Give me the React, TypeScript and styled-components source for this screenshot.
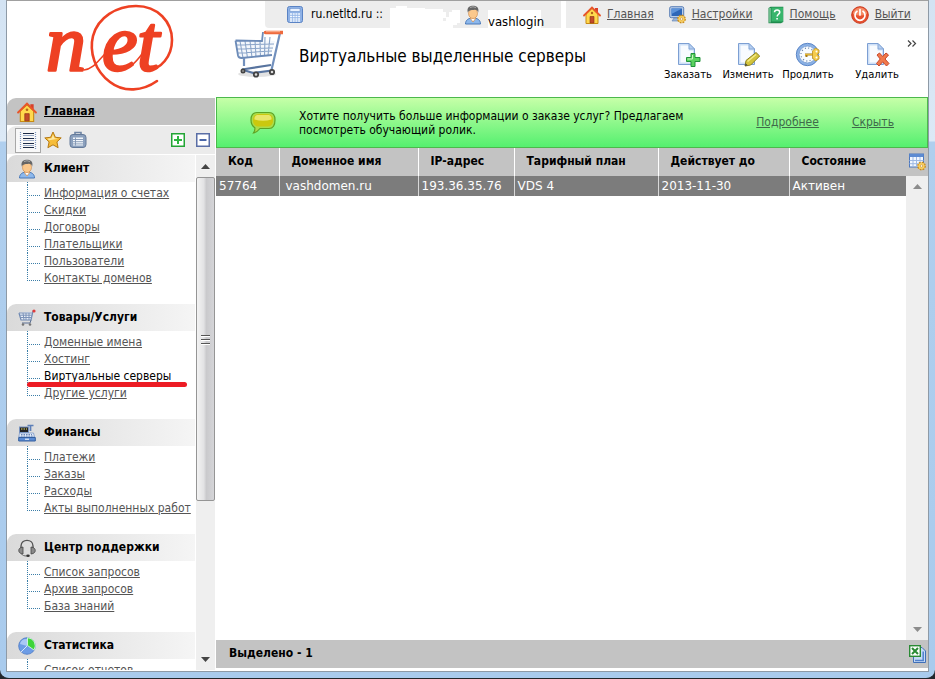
import React from 'react';
import styled, { createGlobalStyle, css } from 'styled-components';

const sans = "Tahoma, 'DejaVu Sans Condensed', 'DejaVu Sans', sans-serif";
const wide = "Verdana, 'DejaVu Sans', sans-serif";

const GlobalStyle = createGlobalStyle`
  * { box-sizing: border-box; }
  body { margin: 0; background: #23262b; font: 12px/17px ${sans}; color: #000; }
  ul { list-style: none; margin: 0; padding: 0; }
  button { font: inherit; color: inherit; background: none; border: 0; margin: 0; padding: 0; cursor: pointer; }
  svg { display: block; flex: none; }
`;

/* ---------- window ---------- */

const Frame = styled.div`
  height: 100vh;
  min-height: 400px;
  display: flex;
  padding: 0 6px 6px 6px;
  border-bottom: 1px solid #23262b;
  border-radius: 0 0 9px 9px;
  background: linear-gradient(#d3e3f3 0, #dce9f6 141px, #b0cfee 142px, #a9cbed 100%);
`;

const Page = styled.div`
  flex: 1;
  min-width: 0;
  display: flex;
  gap: 1px;
  background: #fff;
  border: 1px solid #8e9aa6;
  border-top-color: #a0a0a0;
  padding-bottom: 1px;
`;

const Sidebar = styled.aside`
  width: 208px;
  flex: none;
  display: flex;
  flex-direction: column;
`;

const Main = styled.main`
  flex: 1;
  min-width: 0;
  display: flex;
  flex-direction: column;
`;

/* ---------- sidebar ---------- */

const LogoBox = styled.div`
  height: 97px;
  padding-left: 34px;
`;

const LogoSvg = styled.svg`
  overflow: visible;
`;

const HomeBar = styled.div`
  height: 27px;
  display: flex;
  align-items: center;
  gap: 7px;
  padding-left: 10px;
  background: #c3c3c3;
  border-top-left-radius: 9px;
  font-weight: bold;
`;

const HomeLink = styled.a`
  color: #000;
`;

const ViewBar = styled.div`
  height: 28px;
  margin: 1px 0;
  display: flex;
  align-items: center;
  justify-content: space-between;
  padding: 0 5px 0 8px;
  background: #ebebeb;
  border-top-left-radius: 9px;
`;

const ViewGroup = styled.div<{ $gap: number }>`
  display: flex;
  align-items: center;
  gap: ${(p) => p.$gap}px;
`;

const ViewButton = styled.button<{ $active?: boolean }>`
  display: flex;
  ${(p) =>
    p.$active &&
    css`
      padding: 2px 3px;
      background: #f8f8f8;
      border: 1px solid #a8a8a8;
      margin-right: -4px;
    `}
`;

const Spacer = styled.div`
  flex: 1;
`;

const NavArea = styled.div`
  flex: 1;
  min-height: 0;
  display: flex;
  gap: 1px;
`;

const Nav = styled.nav`
  flex: 1;
  overflow: hidden;
`;

const GroupTitle = styled.h2`
  margin: 0;
  height: 27px;
  display: flex;
  align-items: center;
  gap: 8px;
  padding-left: 11px;
  font-size: 12px;
  border-top-left-radius: 9px;
  background: linear-gradient(to right, #dadada, #f5f5f5);
`;

const dotsDown = 'repeating-linear-gradient(#3b7ea8 0 1px, transparent 1px 2px)';
const dotsAcross = 'repeating-linear-gradient(to right, #3b7ea8 0 1px, transparent 1px 2px)';

const Items = styled.ul`
  padding: 3px 0 17px 20px;
  background: ${dotsDown} 20px 0 / 1px 3px no-repeat;
`;

const Item = styled.li`
  position: relative;
  height: 17px;
  padding-left: 17px;
  white-space: nowrap;
  background: ${dotsDown} 0 0 / 1px 100% no-repeat, ${dotsAcross} 0 10px / 14px 1px no-repeat;
  &:last-child {
    background: ${dotsDown} 0 0 / 1px 10px no-repeat, ${dotsAcross} 0 10px / 14px 1px no-repeat;
  }
`;

const ItemLink = styled.a<{ $current?: boolean }>`
  color: ${(p) => (p.$current ? '#000' : '#555')};
  text-decoration: ${(p) => (p.$current ? 'none' : 'underline')};
`;

const Marker = styled.span`
  position: absolute;
  left: 0;
  top: 14px;
  width: 160px;
  height: 5px;
  border-radius: 3px;
  background: #ed1c24;
  z-index: 1;
`;

/* ---------- scroll bars ---------- */

const Track = styled.div`
  width: 19px;
  flex: none;
  display: flex;
  flex-direction: column;
  background: #efefef;
`;

const Arrow = styled.button`
  height: 22px;
  width: 100%;
  display: flex;
  align-items: center;
  justify-content: center;
`;

const RowArrow = styled(Arrow)`
  height: 20px;
`;

const Thumb = styled.div`
  flex: 0 1 324px;
  display: flex;
  align-items: center;
  justify-content: center;
  border: 1px solid #959595;
  border-radius: 2px;
  background: linear-gradient(to right, #f3f3f3 0%, #e2e2e4 40%, #c9c9cc 55%, #d5d5d8 100%);
`;

/* ---------- top ---------- */

const TopBar = styled.div`
  height: 27px;
  display: flex;
  justify-content: space-between;
  gap: 5px;
  padding-left: 49px;
`;

const Account = styled.div`
  flex: 0 0 296px;
  display: flex;
  align-items: center;
  padding-left: 22px;
  background: #ededed;
  border-bottom-left-radius: 4px;
`;

const Host = styled.span`
  width: 75px;
  margin: 0 4px 0 8px;
  white-space: nowrap;
`;

const Login = styled.span`
  align-self: flex-end;
  height: 18px;
  width: 53px;
  margin-left: 6px;
  padding-top: 3px;
  background: #fff;
  font-size: 13px;
  white-space: nowrap;
`;

const Shortcuts = styled.nav`
  flex: 1;
  display: flex;
  align-items: center;
  gap: 15px;
  padding-left: 17px;
  background: #ededed;
`;

const Shortcut = styled.a`
  display: flex;
  align-items: center;
  gap: 6px;
  color: #555;
`;

const TitleRow = styled.header`
  height: 69px;
  display: flex;
  align-items: flex-start;
  padding: 0 11px 0 16px;
`;

const Title = styled.h1`
  flex: 1;
  margin: 14px 0 0 16px;
  font-size: 17px;
  line-height: 28px;
  font-weight: normal;
  white-space: nowrap;
`;

const Actions = styled.div`
  display: flex;
  padding-top: 14px;
`;

const Action = styled.button<{ $apart?: boolean }>`
  width: 60px;
  margin-left: ${(p) => (p.$apart ? '9px' : '0')};
  display: flex;
  flex-direction: column;
  align-items: center;
  gap: 1px;
  font: 10px/12px ${wide};
`;

const More = styled.button`
  margin-top: 12px;
`;

/* ---------- banner ---------- */

const Banner = styled.section`
  height: 51px;
  display: flex;
  align-items: center;
  padding: 0 33px;
  border: 1px solid #4cb84c;
  background: linear-gradient(#c6ffa8, #55f06f);
`;

const BannerText = styled.p`
  flex: 1 1 385px;
  max-width: 400px;
  margin: 0 auto 0 23px;
  line-height: 14px;
`;

const BannerLink = styled.a`
  margin-left: 33px;
  color: #3f6a4a;
`;

/* ---------- table ---------- */

const Grid = styled.table`
  width: 100%;
  table-layout: fixed;
  border-collapse: collapse;
  text-align: left;
`;

const Col = styled.col<{ $w?: number }>`
  width: ${(p) => (p.$w ? `${p.$w}px` : 'auto')};
`;

const Th = styled.th`
  height: 28px;
  padding: 0 0 2px 12px;
  background: #c3c3c3;
  border-left: 1px solid #fff;
  white-space: nowrap;
  &:first-child { border-left: 0; }
  &:last-child { border-left: 0; padding: 0 2px 0 3px; }
`;

const Td = styled.td<{ $indent?: boolean }>`
  height: 20px;
  padding: 0 0 0 ${(p) => (p.$indent ? '6px' : '3px')};
  font: 12px/16px ${wide};
  color: #fff;
  background: #7c7c7c;
  border-left: 1px solid #d8d8d8;
  white-space: nowrap;
  &:first-child { border-left: 0; }
`;

const ArrowCell = styled.td`
  padding: 0;
  background: #efefef;
`;

const Blank = styled.div`
  flex: 1;
  display: flex;
  justify-content: flex-end;
`;

const WideTrack = styled(Track)`
  width: 22px;
  justify-content: flex-end;
`;

const Footer = styled.footer`
  height: 28px;
  margin-bottom: 2px;
  display: flex;
  align-items: center;
  justify-content: space-between;
  padding: 0 2px 1px 13px;
  background: #c3c3c3;
  font-weight: bold;
`;

/* ---------- drawings ---------- */

const Logo = () => (
  <LogoSvg width="140" height="95" viewBox="41 1 140 95" role="img" aria-label="net">
    <g fill="none" stroke="#ee4123" strokeLinecap="round">
      <path strokeWidth="2.600" d="M157 81C143 91 124 93 110 82C95 71 89 52 93 36C98 17 117 6 136 6C158 6 172 22 172 40C172 56 161 70 147 70" />
      <path strokeWidth="1.500" d="M84 70C94 69 98 60 108 51M116 69C130 70 136 62 142 54" />
    </g>
    <g fill="#ee4123" stroke="#ee4123" strokeWidth="2.600" strokeLinejoin="round" fontFamily="'Liberation Serif', serif" fontStyle="italic">
      <text x="46" y="70" fontSize="80">n</text>
      <text x="102" y="70" fontSize="80">e</text>
      <text x="137" y="70" fontSize="80">t</text>
    </g>
  </LogoSvg>
);

const House = ({ size = 18 }: { size?: number }) => (
  <svg width={size} height={size} viewBox="0 0 18 18">
    <path d="M12 2h3v5h-3z" fill="#d8402a" />
    <path d="M3 8v9.500h12V8L9 2.500z" fill="#ffd84d" stroke="#c88a12" />
    <path d="M1 9.500L9 1.500l8 8" fill="none" stroke="#e8552a" strokeWidth="1.800" strokeLinecap="round" />
    <path d="M7 10.500h4V17H7z" fill="#c34a28" stroke="#8a2f16" strokeWidth=".6" />
    <circle cx="9" cy="7" r="1.200" fill="#b5651a" />
  </svg>
);

const Person = () => (
  <svg width="18" height="20" viewBox="0 0 18 20">
    <path d="M1.500 19c0-4 3-6 7.500-6s7.500 2 7.500 6z" fill="#8db8ec" stroke="#4878b8" />
    <path d="M6 13l3 4 3-4z" fill="#fff" stroke="#d98a3c" strokeWidth=".7" />
    <ellipse cx="9" cy="8.500" rx="4.500" ry="5" fill="#fbc88c" stroke="#c98545" strokeWidth=".6" />
    <path d="M3.800 7.500C2.500 2 6 .8 9 .8s6.500 1.200 5.200 6.700C13.500 5 12 4.500 9.500 5 7 5.200 5 5 3.800 7.500z" fill="#666" />
    <path d="M6 2.500q3-1.500 6 0" stroke="#aaa" fill="none" />
  </svg>
);

const Calc = () => (
  <svg width="16" height="17" viewBox="0 0 16 17">
    <rect x=".5" y=".5" width="15" height="16" rx="2" fill="#8fb2e6" stroke="#5a83c4" />
    <rect x="3" y="2.500" width="10" height="3" fill="#e9f2ff" stroke="#5a83c4" strokeWidth=".5" />
    <path d="M3 8h10M3 10.500h10M3 13h10M3 15h10" stroke="#f4f9ff" strokeWidth="1.500" strokeDasharray="2 .7" />
  </svg>
);

const Gear = ({ x, y }: { x: number; y: number }) => (
  <g transform={`translate(${x} ${y})`}>
    <circle r="3.600" fill="#f6c64c" stroke="#c98a1a" strokeWidth="1.600" strokeDasharray="1.700 1.100" />
    <circle r="3" fill="#f8cf62" />
    <circle r="1.200" fill="#fff" stroke="#b87d16" strokeWidth=".5" />
  </g>
);

const Monitor = () => (
  <svg width="17" height="18" viewBox="0 0 17 18">
    <rect x=".7" y=".7" width="14" height="11" rx="1.500" fill="#b8cdea" stroke="#5a7fb5" />
    <rect x="2.500" y="2.500" width="10.500" height="7.500" fill="#2d66b8" />
    <path d="M2.500 2.500H13L2.500 8z" fill="#5c93da" />
    <path d="M5 12h5l1 3H3z" fill="#9cb4d6" stroke="#5a7fb5" strokeWidth=".6" />
    <Gear x={12.5} y={13} />
  </svg>
);

const HelpBook = () => (
  <svg width="16" height="18" viewBox="0 0 16 18">
    <path d="M.5 2L2.500.7h12.800v15.300L13 17.300H.5z" fill="#1e8a4c" />
    <path d="M3.500 1.500h11.500v14H3.500z" fill="#38b56c" />
    <path d="M2 2v14.500" stroke="#b8ecc8" />
    <path d="M6.500 6.200c.2-3 5.500-3 5.200.2-.2 2-2.500 1.800-2.500 4.200M9.100 12v1.600" stroke="#fff" strokeWidth="1.600" fill="none" />
  </svg>
);

const Power = () => (
  <svg width="18" height="18" viewBox="0 0 18 18">
    <circle cx="9" cy="9" r="8.300" fill="#e8502e" stroke="#c8371c" />
    <path d="M2 8a7 6.500 0 0 1 14 0q-7 3-14 0z" fill="#f58a64" />
    <path d="M6 5.300a5 5 0 1 0 6 0M9 3.500v5.500" stroke="#fff" strokeWidth="1.700" fill="none" strokeLinecap="round" />
  </svg>
);

const BigCart = () => (
  <svg width="51" height="51" viewBox="0 0 51 51">
    <ellipse cx="25" cy="46" rx="19" ry="3" fill="#e2e2e2" />
    <path d="M4 13l2 15c.3 2 1.500 3 3.500 3L39 27l4-14-13-1z" fill="#f3f7fc" />
    <path d="M4 17l38-1M5 21l36-1M6 25l34-2M8 13l3 17M13 13l2.500 17M18 13l2 16.500M23 13l1 16M28 13l.5 15.500M33 9l-.5 19M38 9l-2 18.500" stroke="#8ba5c9" strokeWidth="1.100" fill="none" />
    <path d="M3.500 12.500L30 13l1-9M3.500 12.500L6 27.500c.4 1.700 1.500 2.500 3.500 2.500L40 27" stroke="#6c8bb8" strokeWidth="1.800" fill="none" />
    <path d="M48 5l-8.500 37M12 30v8" stroke="#7290bd" strokeWidth="2.200" fill="none" />
    <path d="M39 37L10 41.500l11 3.500 19-2.500" stroke="#58749f" strokeWidth="2.200" fill="none" />
    <path d="M33.500 4.500h17" stroke="#ee6a3e" strokeWidth="3.600" strokeLinecap="round" />
    <path d="M34 3.700h14" stroke="#fbb394" strokeWidth="1" />
    <g fill="#ddd" stroke="#444" strokeWidth="1.800">
      <circle cx="11" cy="43" r="1.600" /><circle cx="24" cy="46.500" r="2.200" /><circle cx="40" cy="44" r="2.200" />
    </g>
  </svg>
);

const Sheet = ({ children }: { children: React.ReactNode }) => (
  <svg width="26" height="26" viewBox="0 0 26 26">
    <path d="M3.500 1.500h10.500l5.500 5.500v15.500h-16z" fill="#cfe0f7" stroke="#7c9fd3" />
    <path d="M5.500 3.500h8v5h4.500v12H5.500z" fill="#f8fbff" />
    <path d="M14 1.500V7h5.500z" fill="#b6cff0" stroke="#7c9fd3" strokeWidth=".8" />
    {children}
  </svg>
);

const OrderIcon = () => (
  <Sheet>
    <path d="M16 11.500h4v4h5v4h-5v5h-4v-5h-4.500v-4H16z" fill="#5bd25f" stroke="#20923a" />
    <path d="M17.500 13v4h-5" stroke="#c9f5c2" fill="none" />
  </Sheet>
);

const EditIcon = () => (
  <Sheet>
    <path d="M10 24l1-5.500 10-8 3.700 3.500-9 9z" fill="#d3c43c" stroke="#8c8320" />
    <path d="M12.500 19.500l8.500-7" stroke="#f3eb8c" strokeWidth="1.500" />
    <path d="M10 24l.6-2.700 2 2z" fill="#444" />
  </Sheet>
);

const DeleteIcon = () => (
  <Sheet>
    <path d="M13 13l2.500-2 3.200 3.500L22 11l2.500 2-3.500 4 4 4.500-2.500 2.500-3.800-4.200L15 24l-2.500-2.500 3.700-4.500z" fill="#f07a4c" stroke="#c9472a" />
  </Sheet>
);

const ProlongIcon = () => (
  <svg width="26" height="26" viewBox="0 0 26 26">
    <circle cx="12.500" cy="12.500" r="11.200" fill="#8bb1e4" stroke="#5b86c8" />
    <circle cx="12.500" cy="12.500" r="8.400" fill="#f7fbff" stroke="#6d93cc" strokeWidth=".7" />
    <circle cx="12.500" cy="12.500" r="6.500" fill="none" stroke="#6a83a8" strokeWidth="1.300" strokeDasharray="1 2.400" />
    <path d="M10 12.500h8M11.500 12.500v2.500" stroke="#a87a10" strokeWidth="2" />
    <path d="M10 12.500h8" stroke="#f2c63c" strokeWidth=".8" />
    <path d="M17.500 9l3-3 3.500 2v3l-2 1.500 2 1.500v3l-3.500 2-3-3z" fill="#f5cb4a" stroke="#bd8f1c" strokeWidth=".8" />
    <circle cx="21.500" cy="9.500" r="1" fill="#fff" /><circle cx="21.500" cy="15.500" r="1" fill="#fff" />
  </svg>
);

const Bubble = () => (
  <svg width="26" height="24" viewBox="0 0 26 24">
    <path d="M7 1.500h12c4 0 6 2.500 6 7.500s-2 8.500-6 8.500h-9c-2 2.500-4 4-6.500 4.500 1.300-2 1.600-3.500 1.300-5.300C2.300 15 1 12.500 1 9c0-5 2-7.500 6-7.500z" fill="#a9dc4a" stroke="#5da324" strokeWidth="1.200" />
    <rect x="3" y="3" width="20" height="12.500" rx="5.500" fill="#cbc80e" />
    <path d="M7 4h12q3 1 2.500 4.500-8.500 2.500-17 0Q4 5 7 4z" fill="#e9e66a" />
  </svg>
);

const ListIcon = () => (
  <svg width="18" height="19" viewBox="0 0 18 19">
    <path d="M4 2.500h11M4 7.500h11M4 12.500h11M4 16.500h11" stroke="#1d2c48" strokeWidth="1.200" />
    <path d="M4 4.500h11M4 9.500h11M4 14.500h11" stroke="#9aabc8" />
    <path d="M1.500 1v17M16.500 1v17" stroke="#7f97c0" strokeDasharray="1 1" strokeWidth="1.200" />
  </svg>
);

const Star = () => (
  <svg width="18" height="18" viewBox="0 0 18 18">
    <path d="M9 1l2.400 5.300 5.800.6-4.300 4 1.200 5.800L9 13.800l-5.100 2.900 1.200-5.800-4.300-4 5.800-.6z" fill="#f6bd3a" stroke="#b67a14" strokeLinejoin="round" />
    <path d="M9 3.500l1.500 3.800 3.500.4-9 1.500-1.500-1.500 4-.4z" fill="#fde9a6" />
  </svg>
);

const Clipboard = () => (
  <svg width="18" height="18" viewBox="0 0 18 18">
    <path d="M6 4V1.500h6V4" fill="none" stroke="#6f85a4" strokeWidth="1.600" />
    <rect x="1" y="3.500" width="16" height="13" rx="3" fill="#8ba0bd" stroke="#647a9a" />
    <rect x="4" y="6.500" width="10" height="8" fill="#f2f6fb" />
    <path d="M4 8.500h10M4 10.700h10M4 12.900h10M6.500 6.500v8" stroke="#7f94b2" strokeWidth=".9" />
  </svg>
);

const Fold = ({ open }: { open?: boolean }) => (
  <svg width="14" height="14" viewBox="0 0 14 14">
    <rect x=".75" y=".75" width="12.500" height="12.500" fill="#fff" stroke={open ? '#23a535' : '#5a6ea6'} strokeWidth="1.500" />
    <path d={open ? 'M3 7h8M7 3v8' : 'M3.500 7h7'} stroke={open ? '#2db53f' : '#4a66a8'} strokeWidth="2" />
  </svg>
);

const SmallCart = () => (
  <svg width="18" height="18" viewBox="0 0 18 18">
    <path d="M1 4l2 7h10l2-9h2" fill="#e8eef7" stroke="#6e88b2" strokeWidth="1.200" />
    <path d="M2 6.200h12M2.700 8.500h11M5 4l1 7M8 4v7M11 4v7M1 4h13" stroke="#7c93b8" />
    <path d="M13 11l-1 3H4" stroke="#5a6f92" fill="none" />
    <circle cx="5" cy="15.500" r="1.300" fill="#777" /><circle cx="12" cy="15.500" r="1.300" fill="#777" />
    <circle cx="16" cy="2" r="1.600" fill="#e03a3a" />
  </svg>
);

const Register = () => (
  <svg width="18" height="18" viewBox="0 0 18 18">
    <path d="M9.500 1.500h6M12.500 1.500V7" stroke="#5d7fb8" strokeWidth="1.700" />
    <rect x="1.500" y="3" width="9" height="5.500" fill="#222" stroke="#7893bf" />
    <path d="M3 5h1.500M5.500 5H7M8 5h1" stroke="#eee46a" />
    <path d="M1.500 9h14l1 4H.8z" fill="#e3ecf8" stroke="#7b97c6" strokeWidth=".8" />
    <path d="M3 10.500h11M3 12h12" stroke="#6a86b5" strokeDasharray="1.500 1" />
    <path d="M.7 13.500h16.600V17H.7z" fill="#5b8bd3" stroke="#345f9f" />
    <path d="M7 15.200h4" stroke="#fff" />
  </svg>
);

const Headset = () => (
  <svg width="18" height="18" viewBox="0 0 18 18">
    <path d="M3 11V7c0-7.500 12-7.500 12 0v4" fill="none" stroke="#555" strokeWidth="1.400" />
    <path d="M3 8.500c-3 1-3 5 0 6l2 .5V8zM15 8.500c3 1 3 5 0 6l-2 .5V8z" fill="#8a8a8a" stroke="#444" strokeWidth=".8" />
    <path d="M3.500 15c1 1.500 3 2 5 2" stroke="#666" fill="none" />
    <ellipse cx="10" cy="16.800" rx="1.800" ry="1.200" fill="#333" />
  </svg>
);

const Pie = () => (
  <svg width="18" height="18" viewBox="0 0 18 18">
    <circle cx="9" cy="9" r="8.300" fill="#6c9ce6" stroke="#4a78c4" strokeWidth=".8" />
    <path d="M2 7a7 6 0 0 1 7-5v7z" fill="#a9c8f5" />
    <path d="M9.500 8.500V.7A8 8 0 0 1 16 13z" fill="#3fd43a" stroke="#e8ffe8" strokeWidth=".8" />
    <path d="M9 9L3 15" stroke="#d7e6fb" />
  </svg>
);

const Triangle = ({ down, pale }: { down?: boolean; pale?: boolean }) => (
  <svg width="9" height="5" viewBox="0 0 9 5">
    <path d={down ? 'M0 0h9L4.500 5z' : 'M0 5h9L4.500 0z'} fill={pale ? '#8c8c8c' : '#444'} />
  </svg>
);

const Grip = () => (
  <svg width="9" height="11" viewBox="0 0 9 11">
    <path d="M0 1.500h9M0 5.500h9M0 9.500h9" stroke="#555" />
    <path d="M0 2.500h9M0 6.500h9M0 10.500h9" stroke="#fff" />
  </svg>
);

const ColumnsIcon = () => (
  <svg width="17" height="18" viewBox="0 0 17 18">
    <rect x=".5" y="1" width="14" height="13" fill="#f2f7ff" stroke="#4d78bd" />
    <path d="M.5 1h14v3H.5z" fill="#5d8bd2" />
    <path d="M.5 7.500h14M.5 10.700h14M4 4v10M7.500 4v10M11 4v10" stroke="#9db9e4" />
    <Gear x={12.5} y={13} />
  </svg>
);

const ExcelIcon = () => (
  <svg width="17" height="18" viewBox="0 0 17 18">
    <path d="M4.500 2.500h8.500l3.500 3.500v11.500h-12z" fill="#c5daf5" stroke="#3f6fb8" />
    <path d="M14.200 6.500v9H6" stroke="#4f80cc" strokeWidth="1.500" fill="none" />
    <rect x=".7" y=".7" width="10.600" height="10.600" fill="#fff" stroke="#2a8a34" strokeWidth="1.400" />
    <path d="M3 3l6 6M9 3L3 9" stroke="#2a8a34" strokeWidth="2" />
  </svg>
);

const Smudge = () => (
  <svg width="74" height="27" viewBox="0 0 74 27">
    <path d="M0 7h6V5h11v2h18V8h18v3h3v5h3v-5h3V9h8v13h-3v2h-4v3H0z" fill="#fff" />
    <path d="M53 17h3v3h-3z" fill="#ededed" />
  </svg>
);

const Chevrons = () => (
  <svg width="10" height="7" viewBox="0 0 10 7">
    <path d="M1 .5l3 3-3 3M5.500.5l3 3-3 3" fill="none" stroke="#444" strokeWidth="1.200" />
  </svg>
);

/* ---------- data ---------- */

const groups = [
  {
    title: 'Клиент',
    icon: <Person />,
    items: ['Информация о счетах', 'Скидки', 'Договоры', 'Плательщики', 'Пользователи', 'Контакты доменов'],
  },
  {
    title: 'Товары/Услуги',
    icon: <SmallCart />,
    items: ['Доменные имена', 'Хостинг', 'Виртуальные серверы', 'Другие услуги'],
  },
  { title: 'Финансы', icon: <Register />, items: ['Платежи', 'Заказы', 'Расходы', 'Акты выполненных работ'] },
  { title: 'Центр поддержки', icon: <Headset />, items: ['Список запросов', 'Архив запросов', 'База знаний'] },
  { title: 'Статистика', icon: <Pie />, items: ['Список отчетов'] },
];

const current = 'Виртуальные серверы';

const columns = [
  { name: 'Код', width: 63 },
  { name: 'Доменное имя', width: 139 },
  { name: 'IP-адрес', width: 96 },
  { name: 'Тарифный план', width: 144 },
  { name: 'Действует до', width: 131 },
  { name: 'Состояние' },
];

const row = ['57764', 'vashdomen.ru', '193.36.35.76', 'VDS 4', '2013-11-30', 'Активен'];

export default function App() {
  return (
    <>
      <GlobalStyle />
      <Frame>
        <Page>
          <Sidebar>
            <LogoBox><Logo /></LogoBox>
            <HomeBar>
              <House size={20} />
              <HomeLink href="#home">Главная</HomeLink>
            </HomeBar>
            <ViewBar>
              <ViewGroup $gap={7}>
                <ViewButton $active aria-label="Список"><ListIcon /></ViewButton>
                <ViewButton aria-label="Избранное"><Star /></ViewButton>
                <ViewButton aria-label="Буфер"><Clipboard /></ViewButton>
              </ViewGroup>
              <ViewGroup $gap={11}>
                <ViewButton aria-label="Развернуть"><Fold open /></ViewButton>
                <ViewButton aria-label="Свернуть"><Fold /></ViewButton>
              </ViewGroup>
            </ViewBar>
            <NavArea>
              <Nav>
                {groups.map((g) => (
                  <section key={g.title}>
                    <GroupTitle>{g.icon}{g.title}</GroupTitle>
                    <Items>
                      {g.items.map((t) => (
                        <Item key={t}>
                          <ItemLink href="#item" $current={t === current}>{t}</ItemLink>
                          {t === current && <Marker />}
                        </Item>
                      ))}
                    </Items>
                  </section>
                ))}
              </Nav>
              <Track>
                <Arrow aria-label="Вверх"><Triangle /></Arrow>
                <Thumb><Grip /></Thumb>
                <Spacer />
                <Arrow aria-label="Вниз"><Triangle down /></Arrow>
              </Track>
            </NavArea>
          </Sidebar>
          <Main>
            <TopBar>
              <Account>
                <Calc />
                <Host>ru.netltd.ru ::</Host>
                <Smudge />
                <Person />
                <Login>vashlogin</Login>
              </Account>
              <Shortcuts>
                <Shortcut href="#home"><House />Главная</Shortcut>
                <Shortcut href="#settings"><Monitor />Настройки</Shortcut>
                <Shortcut href="#help"><HelpBook />Помощь</Shortcut>
                <Shortcut href="#exit"><Power />Выйти</Shortcut>
              </Shortcuts>
            </TopBar>
            <TitleRow>
              <BigCart />
              <Title>Виртуальные выделенные серверы</Title>
              <Actions>
                <Action><OrderIcon />Заказать</Action>
                <Action><EditIcon />Изменить</Action>
                <Action><ProlongIcon />Продлить</Action>
                <Action $apart><DeleteIcon />Удалить</Action>
              </Actions>
              <More aria-label="Ещё"><Chevrons /></More>
            </TitleRow>
            <Banner>
              <Bubble />
              <BannerText>Хотите получить больше информации о заказе услуг? Предлагаем посмотреть обучающий ролик.</BannerText>
              <BannerLink href="#more">Подробнее</BannerLink>
              <BannerLink href="#hide">Скрыть</BannerLink>
            </Banner>
            <Grid>
              <colgroup>
                {columns.map((c) => <Col key={c.name} $w={c.width} />)}
                <Col $w={22} />
              </colgroup>
              <thead>
                <tr>
                  {columns.map((c) => <Th key={c.name}>{c.name}</Th>)}
                  <Th><ColumnsIcon /></Th>
                </tr>
              </thead>
              <tbody>
                <tr>
                  {row.map((v, i) => <Td key={v} $indent={i === 1}>{v}</Td>)}
                  <ArrowCell><RowArrow aria-label="Вверх"><Triangle pale /></RowArrow></ArrowCell>
                </tr>
              </tbody>
            </Grid>
            <Blank>
              <WideTrack><Arrow aria-label="Вниз"><Triangle down pale /></Arrow></WideTrack>
            </Blank>
            <Footer>
              <span>Выделено - 1</span>
              <ExcelIcon />
            </Footer>
          </Main>
        </Page>
      </Frame>
    </>
  );
}
